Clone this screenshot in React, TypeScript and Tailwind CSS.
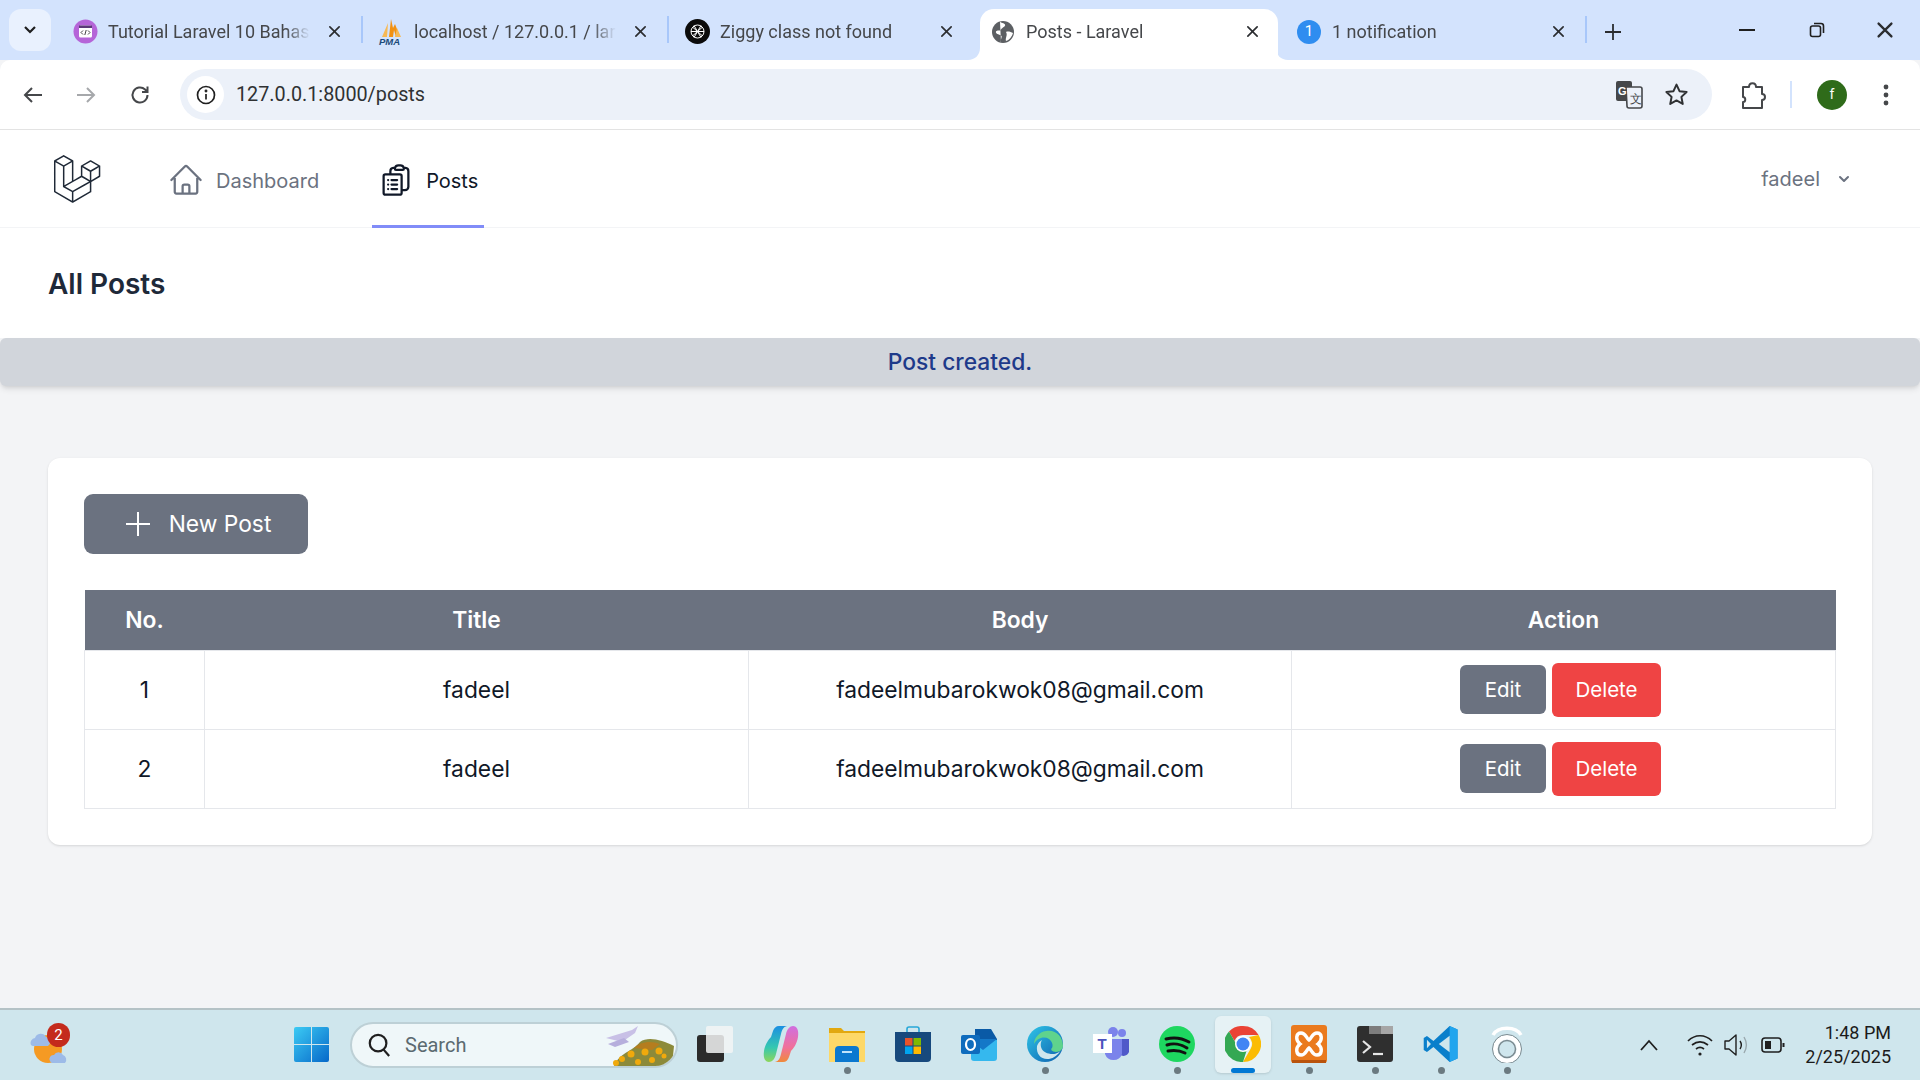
import type { ReactNode } from "react";

const logoPath =
  "M305.8 81.125C305.77 80.995 305.69 80.885 305.65 80.755C305.56 80.525 305.49 80.285 305.37 80.075C305.29 79.935 305.17 79.815 305.07 79.685C304.94 79.515 304.83 79.325 304.68 79.175C304.55 79.045 304.39 78.955 304.25 78.845C304.09 78.715 303.95 78.575 303.77 78.475L251.32 48.275C249.97 47.495 248.31 47.495 246.96 48.275L194.51 78.475C194.33 78.575 194.19 78.725 194.03 78.845C193.89 78.955 193.73 79.045 193.6 79.175C193.45 79.325 193.34 79.515 193.21 79.685C193.11 79.815 192.99 79.935 192.91 80.075C192.79 80.285 192.71 80.525 192.63 80.755C192.58 80.875 192.51 80.995 192.48 81.125C192.38 81.495 192.33 81.875 192.33 82.265V139.625L148.62 164.795V52.575C148.62 52.185 148.57 51.805 148.47 51.435C148.44 51.305 148.36 51.195 148.32 51.065C148.23 50.835 148.16 50.595 148.04 50.385C147.96 50.245 147.84 50.125 147.74 49.995C147.61 49.825 147.5 49.635 147.35 49.485C147.22 49.355 147.06 49.265 146.92 49.155C146.76 49.025 146.62 48.885 146.44 48.785L93.99 18.585C92.64 17.805 90.98 17.805 89.63 18.585L37.18 48.785C37 48.885 36.86 49.035 36.7 49.155C36.56 49.265 36.4 49.355 36.27 49.485C36.12 49.635 36.01 49.825 35.88 49.995C35.78 50.125 35.66 50.245 35.58 50.385C35.46 50.595 35.38 50.835 35.3 51.065C35.25 51.185 35.18 51.305 35.15 51.435C35.05 51.805 35 52.185 35 52.575V232.235C35 233.795 35.84 235.245 37.19 236.025L142.1 296.425C142.33 296.555 142.58 296.635 142.83 296.725C142.95 296.765 143.06 296.835 143.18 296.865C143.55 296.965 143.93 297.015 144.31 297.015C144.69 297.015 145.07 296.965 145.44 296.865C145.56 296.835 145.67 296.765 145.79 296.725C146.04 296.635 146.29 296.555 146.52 296.425L251.43 236.025C252.78 235.245 253.62 233.805 253.62 232.235V174.875L303.83 145.965C305.19 145.185 306.03 143.745 306.03 142.175V82.265C305.95 81.875 305.9 81.495 305.8 81.125ZM144.2 227.205L100.57 202.515L146.39 176.135L196.66 147.195L240.33 172.335L208.29 190.625L144.2 227.205ZM244.75 114.995V164.795L226.39 154.225L201.03 139.625V89.825L219.39 100.395L244.75 114.995ZM249.12 57.105L292.81 82.265L249.12 107.425L205.43 82.265L249.12 57.105ZM114.49 184.425L96.13 194.995V85.305L121.49 70.705L139.85 60.135V169.815L114.49 184.425ZM91.76 27.425L135.45 52.585L91.76 77.745L48.07 52.585L91.76 27.425ZM43.67 60.135L62.03 70.705L87.39 85.305V202.545V202.555V202.565C87.39 202.735 87.44 202.895 87.46 203.055C87.49 203.265 87.49 203.485 87.55 203.695V203.705C87.6 203.875 87.69 204.035 87.76 204.195C87.84 204.375 87.89 204.575 87.99 204.745C87.99 204.745 87.99 204.755 88 204.755C88.09 204.905 88.22 205.035 88.33 205.175C88.45 205.335 88.55 205.495 88.69 205.635L88.7 205.645C88.82 205.765 88.98 205.855 89.12 205.965C89.28 206.085 89.42 206.225 89.59 206.325C89.6 206.325 89.6 206.325 89.61 206.335C89.62 206.335 89.62 206.345 89.63 206.345L139.87 234.775V285.065L43.67 229.705V60.135ZM244.75 229.705L148.58 285.075V234.775L219.8 194.115L244.75 179.875V229.705ZM297.2 139.625L253.49 164.795V114.995L278.85 100.395L297.21 89.825V139.625H297.2Z";

function CloseX({ size = 13 }: { size?: number }) {
  return (
    <svg width={size} height={size} viewBox="0 0 14 14" stroke="#2b2d30" strokeWidth="1.8" strokeLinecap="round">
      <path d="M2 2l10 10M12 2L2 12" />
    </svg>
  );
}

function Tab({
  title,
  icon,
  active,
  sep,
}: {
  title: string;
  icon: ReactNode;
  active?: boolean;
  sep?: boolean;
}) {
  return (
    <div className="relative flex h-[51px] w-[306px] shrink-0 items-center pb-[6px]">
      {active && (
        <>
          <div className="absolute inset-y-0 left-[2px] right-[6px] rounded-t-[14px] bg-white" />
          <svg className="absolute bottom-0 -left-[10px]" width="12" height="12" viewBox="0 0 12 12" fill="#fff">
            <path d="M12 0v12H0c7 0 12-5 12-12z" />
          </svg>
          <svg className="absolute bottom-0 right-[-4px]" width="12" height="12" viewBox="0 0 12 12" fill="#fff">
            <path d="M0 0v12h12C5 12 0 7 0 0z" />
          </svg>
        </>
      )}
      <div className="relative ml-[12px] flex h-[26px] w-[26px] shrink-0 items-center justify-center">{icon}</div>
      <div className="relative ml-[10px] w-[202px] overflow-hidden whitespace-nowrap text-[18px] text-[#45474a] [mask-image:linear-gradient(to_right,black_88%,transparent)]">
        {title}
      </div>
      <div className="relative ml-[18px]">
        <CloseX />
      </div>
      {sep && <div className="absolute right-[3px] top-[7px] h-[27px] w-[2px] bg-[#a8c7fa]" />}
    </div>
  );
}

function ChromeBar() {
  return (
    <div className="shrink-0 font-['Roboto',sans-serif]">
      <div className="flex h-[60px] items-end bg-[#d3e3fd]">
        <div className="mb-[9px] ml-[9px] mr-[9px] flex h-[42px] w-[42px] items-center justify-center rounded-[12px] bg-[#e9f1fe]">
          <svg width="14" height="10" viewBox="0 0 14 10" fill="none" stroke="#1f1f1f" strokeWidth="2.2">
            <path d="M2 2l5 5 5-5" />
          </svg>
        </div>
        <Tab
          title="Tutorial Laravel 10 Bahasa"
          sep
          icon={
            <svg width="25" height="25" viewBox="0 0 25 25">
              <circle cx="12.5" cy="12.5" r="12" fill="#b565d8" />
              <rect x="6" y="6.5" width="13" height="12" rx="1.5" fill="#fff" />
              <rect x="6" y="6.5" width="13" height="2.5" fill="#5b3a78" />
              <path d="M10 11.5l-2 2 2 2M15 11.5l2 2-2 2M13.2 11l-1.4 5" fill="none" stroke="#444" strokeWidth="1" />
            </svg>
          }
        />
        <Tab
          title="localhost / 127.0.0.1 / laravel"
          sep
          icon={
            <svg width="26" height="26" viewBox="0 0 26 26">
              <path d="M11 18L13 0l2 9 2-4 5 13h-4l-2-7-1 7z" fill="#f29111" />
              <path d="M4 18L10 4l-1 14zM17 18l2-9 4 9z" fill="#f7b955" />
              <text x="1" y="26" fontSize="9.5" fontWeight="700" fontStyle="italic" fill="#1b4a7a" fontFamily="'Liberation Sans',sans-serif">
                PMA
              </text>
            </svg>
          }
        />
        <Tab
          title="Ziggy class not found"
          icon={
            <svg width="25" height="25" viewBox="0 0 25 25" fill="none">
              <circle cx="12.5" cy="12.5" r="12.5" fill="#0b0b0b" />
              <g stroke="#fff" strokeWidth="1">
                <circle cx="12.5" cy="12.5" r="6.5" />
                <path d="M9 6.5l7 12M16 6.5l-7 12M6 12.5h13M8 8.5l9 8M17 8.5l-9 8" />
              </g>
            </svg>
          }
        />
        <Tab
          title="Posts - Laravel"
          active
          icon={
            <svg width="24" height="24" viewBox="0 0 24 24">
              <circle cx="12" cy="12" r="11" fill="#5c5f63" />
              <path d="M9 1.5c1 2 4 1 5 3s-3 3-4 5-4 0-5 2 3 3 5 4-1 4 0 7M15 12c2-1 5 0 7 1-1 3-3 7-7 8-1-3 2-6 0-9z" fill="#fff" />
            </svg>
          }
        />
        <Tab
          title="1 notification"
          sep
          icon={
            <div className="flex h-[24px] w-[24px] items-center justify-center rounded-full bg-[#2f8df0] text-[15px] text-white">1</div>
          }
        />
        <div className="mb-[14px] ml-[14px] flex h-[28px] w-[18px] items-center justify-center">
          <svg width="16" height="16" viewBox="0 0 16 16" stroke="#2b2d30" strokeWidth="1.8">
            <path d="M8 0v16M0 8h16" />
          </svg>
        </div>
        <div className="mb-[12px] ml-auto flex h-[36px] items-center">
          <div className="flex w-[70px] justify-center">
            <svg width="16" height="2" viewBox="0 0 16 2" fill="#1f1f1f">
              <rect width="16" height="2" />
            </svg>
          </div>
          <div className="flex w-[70px] justify-center">
            <svg width="16" height="16" viewBox="0 0 16 16" fill="none" stroke="#1f1f1f" strokeWidth="1.6">
              <rect x="1.5" y="4" width="10" height="10.5" rx="2" />
              <path d="M5 1.5h7a2.5 2.5 0 012.5 2.5v7" />
            </svg>
          </div>
          <div className="flex w-[68px] justify-center pr-[2px]">
            <CloseX size={18} />
          </div>
        </div>
      </div>
      <div className="relative flex h-[70px] items-center rounded-t-[10px] border-b border-[#e3e3e3] bg-white">
        <div className="ml-[22px] flex items-center">
          <svg width="22" height="22" viewBox="0 0 22 22" fill="none" stroke="#45474a" strokeWidth="2">
            <path d="M20 11H3M10 4l-7 7 7 7" />
          </svg>
          <svg className="ml-[31px]" width="22" height="22" viewBox="0 0 22 22" fill="none" stroke="#a6a8ab" strokeWidth="2">
            <path d="M2 11h17M12 4l7 7-7 7" />
          </svg>
          <svg className="ml-[32px]" width="22" height="22" viewBox="0 0 22 22" fill="none" stroke="#45474a" strokeWidth="2">
            <path d="M18.5 11a7.5 7.5 0 11-2.4-5.5L18.500 8M18.500 2.5V8H13" />
          </svg>
        </div>
        <div className="ml-[29px] flex h-[51px] w-[1532px] items-center rounded-full bg-[#ecf1f9]">
          <div className="ml-[7px] flex h-[37px] w-[37px] items-center justify-center rounded-full bg-white">
            <svg width="20" height="20" viewBox="0 0 20 20" fill="none" stroke="#1f1f1f" strokeWidth="1.7">
              <circle cx="10" cy="10" r="8.5" />
              <path d="M10 9v5.5" />
              <circle cx="10" cy="6" r="0.6" fill="#1f1f1f" />
            </svg>
          </div>
          <span className="ml-[12px] text-[19.8px] text-[#2f3133]">127.0.0.1:8000/posts</span>
          <svg className="ml-auto" width="28" height="30" viewBox="0 0 28 30">
            <rect x="1" y="1" width="16" height="20" rx="2" fill="#45474a" />
            <path d="M11 7h14a2 2 0 012 2v17a2 2 0 01-2 2H14a2 2 0 01-2-2z" fill="#ecf1f9" stroke="#45474a" strokeWidth="1.6" />
            <text x="3" y="15" fontSize="11" fontWeight="700" fill="#fff" fontFamily="'Liberation Sans',sans-serif">G</text>
            <text x="15" y="23" fontSize="12" fill="#45474a" fontFamily="'Liberation Sans',sans-serif">文</text>
          </svg>
          <svg className="ml-[21px] mr-[23px]" width="25" height="25" viewBox="0 0 24 24" fill="none" stroke="#2f3133" strokeWidth="1.9" strokeLinejoin="round">
            <path d="M12 2.5l2.9 6.3 6.8.8-5 4.7 1.3 6.8-6-3.4-6 3.4 1.3-6.8-5-4.7 6.8-.8z" />
          </svg>
        </div>
        <svg className="ml-[27px]" width="28" height="30" viewBox="0 0 28 30" fill="none" stroke="#45474a" strokeWidth="2">
          <path d="M4 7h6c0-5 7-5 7 0h6v7c4 0 4 6 0 6v8H4v-6c3 0 3-5 0-5z" strokeLinejoin="round" />
        </svg>
        <div className="ml-[23px] h-[27px] w-[2px] bg-[#d3e3fd]" />
        <div className="ml-[25px] flex h-[30px] w-[30px] items-center justify-center rounded-full bg-[#2f6b1a] text-[14px] text-white">f</div>
        <svg className="ml-[36px]" width="6" height="24" viewBox="0 0 6 24" fill="#45474a">
          <circle cx="3" cy="4" r="2.4" />
          <circle cx="3" cy="12" r="2.4" />
          <circle cx="3" cy="20" r="2.4" />
        </svg>
      </div>
    </div>
  );
}

function NavBar() {
  return (
    <nav className="flex h-[98px] shrink-0 items-stretch border-b border-gray-100 bg-white pl-[48px] pr-[66px]">
      <div className="flex items-center">
        <svg width="54" height="54" viewBox="0 0 316 316" fill="#1f2937">
          <path d={logoPath} />
        </svg>
      </div>
      <a className="ml-[60px] flex items-center gap-[12px] px-[6px] pt-[2px] text-[20px] text-[#6b7280]">
        <svg width="36" height="36" viewBox="0 0 24 24" fill="none" stroke="currentColor" strokeWidth="1.5" strokeLinecap="round" strokeLinejoin="round">
          <path d="M2.25 12l8.954-8.955c.44-.439 1.152-.439 1.591 0L21.75 12M4.5 9.75v10.125c0 .621.504 1.125 1.125 1.125H9.75v-4.875c0-.621.504-1.125 1.125-1.125h2.25c.621 0 1.125.504 1.125 1.125V21h4.125c.621 0 1.125-.504 1.125-1.125V9.75M8.25 21h8.25" />
        </svg>
        <span className="mt-[2px]">Dashboard</span>
      </a>
      <a className="mb-[-1px] ml-[47px] flex items-center gap-[12px] border-b-[3px] border-[#818cf8] px-[6px] pt-[5px] text-[20px] text-gray-900">
        <svg width="36" height="36" viewBox="0 0 24 24" fill="none" stroke="currentColor" strokeWidth="1.5" strokeLinecap="round" strokeLinejoin="round">
          <path d="M9 12h3.75M9 15h3.75M9 18h3.75m3 .75H18a2.25 2.25 0 002.25-2.25V6.108c0-1.135-.845-2.098-1.976-2.192a48.424 48.424 0 00-1.123-.08m-5.801 0c-.065.21-.1.433-.1.664 0 .414.336.75.75.75h4.5a.75.75 0 00.75-.75 2.25 2.25 0 00-.1-.664m-5.8 0A2.251 2.251 0 0113.5 2.25H15c1.012 0 1.867.668 2.15 1.586m-5.8 0c-.376.023-.75.05-1.124.08C9.095 4.01 8.25 4.973 8.25 6.108V8.25m0 0H4.875c-.621 0-1.125.504-1.125 1.125v11.25c0 .621.504 1.125 1.125 1.125h9.75c.621 0 1.125-.504 1.125-1.125V9.375c0-.621-.504-1.125-1.125-1.125H8.25zM6.75 12h.008v.008H6.75V12zm0 3h.008v.008H6.75V15zm0 3h.008v.008H6.75V18z" />
        </svg>
        <span className="mt-[2px]">Posts</span>
      </a>
      <div className="ml-auto flex items-center gap-[14px] text-[20px] text-[#6b7280]">
        <span>fadeel</span>
        <svg width="20" height="20" viewBox="0 0 20 20" fill="currentColor">
          <path fillRule="evenodd" clipRule="evenodd" d="M5.293 7.293a1 1 0 011.414 0L10 10.586l3.293-3.293a1 1 0 111.414 1.414l-4 4a1 1 0 01-1.414 0l-4-4a1 1 0 010-1.414z" />
        </svg>
      </div>
    </nav>
  );
}

const posts = [
  { no: 1, title: "fadeel", body: "fadeelmubarokwok08@gmail.com" },
  { no: 2, title: "fadeel", body: "fadeelmubarokwok08@gmail.com" },
];

function PostsTable() {
  return (
    <table className="w-[1752px] table-fixed border-collapse text-center text-[22.8px] text-gray-900">
      <thead className="bg-[#6b7280] text-white">
        <tr className="h-[60px]">
          <th className="w-[120px] font-semibold">No.</th>
          <th className="w-[544px] font-semibold">Title</th>
          <th className="w-[543px] font-semibold">Body</th>
          <th className="font-semibold">Action</th>
        </tr>
      </thead>
      <tbody>
        {posts.map((p) => (
          <tr key={p.no} className="h-[79px]">
            <td className="border border-gray-200 pt-[2px]">{p.no}</td>
            <td className="border border-gray-200 pt-[2px]">{p.title}</td>
            <td className="border border-gray-200 pt-[2px]">{p.body}</td>
            <td className="border border-gray-200">
              <div className="flex items-center justify-center gap-[6px] pr-[6px] text-[20.5px] text-white">
                <button className="h-[49px] w-[86px] rounded-[6px] bg-[#6b7280] pt-[2px]">Edit</button>
                <button className="h-[54px] w-[109px] rounded-[6px] bg-[#ef4444] pt-[2px]">Delete</button>
              </div>
            </td>
          </tr>
        ))}
      </tbody>
    </table>
  );
}

function Slot({ children, dot, active }: { children: ReactNode; dot?: boolean; active?: boolean }) {
  return (
    <div className="relative flex h-[70px] w-[66px] shrink-0 items-center justify-center">
      {active && <div className="absolute left-[5px] top-[6px] h-[57px] w-[56px] rounded-[6px] bg-[#e6f2f5] shadow-sm" />}
      <div className="relative -mt-[2px] flex h-[38px] w-[38px] items-center justify-center">{children}</div>
      {dot && <div className="absolute bottom-[6px] left-[30px] h-[7px] w-[7px] rounded-full bg-[#6b7a80]" />}
      {active && <div className="absolute bottom-[7px] left-[21px] h-[5px] w-[24px] rounded-full bg-[#0078d4]" />}
    </div>
  );
}

function Taskbar() {
  return (
    <div className="flex h-[72px] shrink-0 items-center border-t-2 border-[#b4c2c6] bg-[#cfe6ed] font-['Roboto',sans-serif]">
      <div className="relative ml-[30px] h-[44px] w-[40px] shrink-0">
        <svg width="40" height="44" viewBox="0 0 40 44">
          <circle cx="18" cy="26" r="14" fill="#f59a23" />
          <path d="M1 22a5 5 0 014-7 6 6 0 0111-1 5 5 0 012 9H4a3 3 0 01-3-1z" fill="#9dbbe8" />
          <path d="M20 38a4 4 0 014-6 5 5 0 019 0 5 5 0 012 8H22a3 3 0 01-2-2z" fill="#9dbbe8" />
        </svg>
        <div className="absolute right-0 top-0 flex h-[24px] w-[23px] items-center justify-center rounded-full bg-[#c42b1c] text-[15px] text-white">2</div>
      </div>
      <div className="ml-[208px]">
        <Slot>
          <svg width="35" height="35" viewBox="0 0 35 35">
            <defs>
              <linearGradient id="win" x1="0" y1="0" x2="1" y2="1">
                <stop offset="0" stopColor="#3ccbf4" />
                <stop offset="1" stopColor="#0668c9" />
              </linearGradient>
            </defs>
            <path d="M0 2a2 2 0 012-2h15v17H0zM18 0h15a2 2 0 012 2v15H18zM0 18h17v17H2a2 2 0 01-2-2zM18 18h17v15a2 2 0 01-2 2H18z" fill="url(#win)" />
          </svg>
        </Slot>
      </div>
      <div className="ml-[6px] flex h-[46px] w-[328px] shrink-0 items-center overflow-hidden rounded-full border-2 border-[#bdd0d6] bg-[#eff7f9] pl-[15px]">
        <svg width="24" height="26" viewBox="0 0 26 28" fill="none" stroke="#1f1f1f" strokeWidth="2.4">
          <circle cx="12" cy="12" r="9" />
          <path d="M18 19l6 7" />
        </svg>
        <span className="ml-[14px] text-[20px] text-[#5b6a70]">Search</span>
        <svg className="ml-auto" width="72" height="42" viewBox="0 0 72 42">
          <path d="M2 14l26-8 6-4-3 7-13 9-4-1z" fill="#c8c0e6" />
          <path d="M4 20l16-6 5 4-14 5z" fill="#b6aedc" />
          <path d="M10 42c6-14 18-14 26-24 8-6 22-2 34 4l-2 20z" fill="#8c8a3a" />
          <path d="M30 24c6-6 16-8 26-4l-8 6z" fill="#b57d1e" />
          <g fill="#f0a90c">
            <circle cx="12" cy="39" r="3" />
            <circle cx="18" cy="35" r="3" />
            <circle cx="27" cy="30" r="3.5" />
            <circle cx="34" cy="38" r="3" />
            <circle cx="41" cy="28" r="3.5" />
            <circle cx="48" cy="36" r="3" />
            <circle cx="55" cy="27" r="3.5" />
            <circle cx="60" cy="32" r="2.5" />
          </g>
        </svg>
      </div>
      <div className="ml-[4px] flex">
        <Slot>
          <svg width="36" height="36" viewBox="0 0 36 36">
            <rect x="0" y="9" width="27" height="27" rx="3" fill="#2b2b2b" />
            <rect x="9" y="0" width="27" height="27" rx="2" fill="#f3f5f5" fillOpacity="0.85" />
          </svg>
        </Slot>
        <Slot>
          <svg width="36" height="36" viewBox="0 0 36 36">
            <defs>
              <linearGradient id="cop1" x1="0" y1="0" x2="0" y2="1">
                <stop offset="0" stopColor="#1b8fe2" />
                <stop offset="0.6" stopColor="#35c8b0" />
                <stop offset="1" stopColor="#8fd65a" />
              </linearGradient>
              <linearGradient id="cop2" x1="0" y1="0" x2="0" y2="1">
                <stop offset="0" stopColor="#d06fe0" />
                <stop offset="0.6" stopColor="#f0709a" />
                <stop offset="1" stopColor="#f08a3a" />
              </linearGradient>
            </defs>
            <path d="M10 5C11 2 13 0 16 0H24C20 1 19 4 18 8L13 28C12 33 9 36 6 36 2 36 0 32 1 25 2 18 6 13 8 11Z" fill="url(#cop1)" />
            <path d="M26 31C25 34 23 36 20 36H12C16 35 17 32 18 28L23 8C24 3 27 0 30 0 34 0 36 4 35 11 34 18 30 23 28 25Z" fill="url(#cop2)" />
          </svg>
        </Slot>
        <Slot dot>
          <svg width="36" height="36" viewBox="0 0 36 36">
            <path d="M0 2h12l3 3h21v31H0z" fill="#e2a80f" />
            <rect x="0" y="7" width="36" height="29" fill="#fdd868" />
            <path d="M6 36V24a4 4 0 014-4h16a4 4 0 014 4v12z" fill="#0b78cf" />
            <rect x="13" y="25" width="10" height="2" fill="#bfe3fb" />
          </svg>
        </Slot>
        <Slot>
          <svg width="36" height="36" viewBox="0 0 36 36">
            <path d="M12 6V3a2 2 0 012-2h8a2 2 0 012 2v3" fill="none" stroke="#28a8d8" strokeWidth="1.6" />
            <path d="M0 6h36v26a4 4 0 01-4 4H4a4 4 0 01-4-4z" fill="#17497d" />
            <rect x="10" y="12" width="7.5" height="7.5" fill="#e8532a" />
            <rect x="18.5" y="12" width="7.5" height="7.5" fill="#7fba00" />
            <rect x="10" y="20.5" width="7.5" height="7.5" fill="#00a4ef" />
            <rect x="18.5" y="20.5" width="7.5" height="7.5" fill="#ffb900" />
          </svg>
        </Slot>
        <Slot>
          <svg width="36" height="36" viewBox="0 0 36 36">
            <path d="M14 3h16l6 10v8L14 30z" fill="#0a5aa6" />
            <path d="M10 14h26v18a3 3 0 01-3 3H13a3 3 0 01-3-3z" fill="#35b8ee" />
            <path d="M36 13L22 24 10 15l2-2z" fill="#1478c8" />
            <rect x="0" y="9" width="19" height="19" rx="2" fill="#0f6cbd" />
            <ellipse cx="9.5" cy="18.5" rx="4.5" ry="5.5" fill="none" stroke="#fff" strokeWidth="2.2" />
          </svg>
        </Slot>
        <Slot dot>
          <svg width="36" height="36" viewBox="0 0 36 36">
            <defs>
              <linearGradient id="edge" x1="0" y1="0" x2="1" y2="1">
                <stop offset="0" stopColor="#2fc6e8" />
                <stop offset="1" stopColor="#0e5fae" />
              </linearGradient>
            </defs>
            <circle cx="18" cy="18" r="18" fill="url(#edge)" />
            <path d="M36 20c0-10-8-17-17-15-7 1-12 7-12 13 3-6 10-8 15-5 4 3 4 7 3 9-2 1 0 4 4 4 4 0 7-3 7-6z" fill="#5fd38d" />
            <path d="M22 33c-8 1-13-5-12-13 1-3 3-5 5-6-3 5-1 14 11 14 3 0 7-2 8-4-3 5-7 8-12 9z" fill="#cfe6ed" />
          </svg>
        </Slot>
        <Slot>
          <svg width="36" height="36" viewBox="0 0 36 36">
            <circle cx="29" cy="7" r="4" fill="#7b83eb" />
            <circle cx="20" cy="6" r="5" fill="#7b83eb" />
            <path d="M26 13h10v13a6 6 0 01-10 2z" fill="#5059c9" />
            <path d="M12 13h17v15a9 9 0 01-17 0z" fill="#7b83eb" />
            <rect x="0" y="8" width="19" height="19" fill="#fff" />
            <text x="4.5" y="23" fontSize="15" fontWeight="700" fill="#4b53bc" fontFamily="'Liberation Sans',sans-serif">T</text>
          </svg>
        </Slot>
        <Slot dot>
          <svg width="36" height="36" viewBox="0 0 36 36" fill="none">
            <circle cx="18" cy="18" r="18" fill="#1ed760" />
            <path d="M7 13c8-2 16-1 23 3M8 19c6-2 14-1 20 3M9 25c6-1 11-1 17 2" stroke="#111" strokeWidth="3" strokeLinecap="round" />
          </svg>
        </Slot>
        <Slot active>
          <svg width="36" height="36" viewBox="0 0 36 36">
            <path d="M18 0a18 18 0 0115.6 9H18a9 9 0 00-8.5 6L4 5.5A18 18 0 0118 0z" fill="#ea4335" />
            <path d="M33.6 9A18 18 0 0118 36l7.8-13.5A9 9 0 0024 11z" fill="#fbbc04" />
            <path d="M18 36A18 18 0 014 5.5l7.8 13.5a8 8 0 0010 5z" fill="#34a853" />
            <circle cx="18" cy="18" r="8" fill="#fff" />
            <circle cx="18" cy="18" r="6.5" fill="#4285f4" />
          </svg>
        </Slot>
        <Slot dot>
          <svg width="36" height="38" viewBox="0 0 36 38" fill="none">
            <rect x="0" y="0" width="36" height="38" rx="3" fill="#ea7a1e" />
            <rect x="1" y="35" width="34" height="3" fill="#b9530c" />
            <path d="M10 8c5 0 5 5 8 7 3-2 3-7 8-7 5 0 6 7 1 11 5 4 4 11-1 11-5 0-5-5-8-7-3 2-3 7-8 7-5 0-6-7-1-11-5-4-4-11 1-11z" stroke="#fff" strokeWidth="3.4" />
          </svg>
        </Slot>
        <Slot dot>
          <svg width="36" height="36" viewBox="0 0 36 36" fill="none">
            <rect width="36" height="36" rx="3" fill="#2f2f2f" />
            <rect width="12" height="8" y="0" x="12" fill="#7d7d7d" />
            <rect width="12" height="8" y="0" x="24" fill="#a6a6a6" />
            <path d="M6 15l7 6-7 6" stroke="#e6e6e6" strokeWidth="2.2" />
            <path d="M16 28h10" stroke="#e6e6e6" strokeWidth="2.2" />
          </svg>
        </Slot>
        <Slot dot>
          <svg width="36" height="38" viewBox="0 0 100 100">
            <path d="M96 10L74 0 29 42 11 28l-9 5v34l9 5 18-14 45 42 22-10z" fill="#0a7fcb" />
            <path d="M74 0l22 10v80l-22 10z" fill="#22a5ee" />
            <path d="M74 27L44 50l30 23z" fill="#cfe6ed" />
            <path d="M11 38l11 12-11 12z" fill="#cfe6ed" />
          </svg>
        </Slot>
        <Slot dot>
          <svg width="34" height="38" viewBox="0 0 34 38" fill="none" stroke="#fff">
            <path d="M3 10C8 1 26 1 31 10" strokeWidth="3.5" />
            <circle cx="17" cy="24" r="12" strokeWidth="4.5" fill="#e8f2f5" />
            <circle cx="17" cy="24" r="14.5" stroke="#7a8a90" strokeWidth="1" />
            <circle cx="17" cy="24" r="8.5" stroke="#7a8a90" strokeWidth="1.5" fill="#cfe6ed" />
          </svg>
        </Slot>
      </div>
      <div className="ml-auto flex items-center pr-[29px]">
        <svg width="18" height="12" viewBox="0 0 18 12" fill="none" stroke="#1f1f1f" strokeWidth="1.8">
          <path d="M1 11l8-9 8 9" />
        </svg>
        <svg className="ml-[29px]" width="26" height="26" viewBox="0 0 26 26" fill="none" stroke="#1f1f1f" strokeWidth="1.7">
          <path d="M1 9c7-7 17-7 24 0M5 13c5-4 11-4 16 0M9 17c2.5-2 5.5-2 8 0" />
          <circle cx="13" cy="22" r="1.6" fill="#1f1f1f" stroke="none" />
        </svg>
        <svg className="ml-[10px]" width="26" height="26" viewBox="0 0 26 26" fill="none" stroke="#1f1f1f" strokeWidth="1.4">
          <path d="M2 9h4l7-6v20l-7-6H2z" strokeLinejoin="round" />
          <path d="M17 9c2 3 2 5 0 8" />
          <path d="M21 5c3 5 3 11 0 16" stroke="#9aa8ad" />
        </svg>
        <svg className="ml-[12px]" width="24" height="16" viewBox="0 0 24 16" fill="none" stroke="#1f1f1f" strokeWidth="1.6">
          <rect x="1" y="1" width="19" height="14" rx="3" />
          <rect x="4" y="4" width="6" height="8" fill="#1f1f1f" stroke="none" />
          <path d="M22.5 6v4" strokeWidth="2" />
        </svg>
        <div className="ml-[22px] flex w-[84px] flex-col items-end text-[18px] leading-[24px] text-[#1b1b1b]">
          <span className="whitespace-nowrap">1:48 PM</span>
          <span className="whitespace-nowrap">2/25/2025</span>
        </div>
      </div>
    </div>
  );
}

export default function App() {
  return (
    <div className="flex h-screen flex-col overflow-hidden bg-[#f3f4f6]">
      <ChromeBar />
      <div className="flex min-h-0 flex-1 flex-col font-['Inter',sans-serif]">
        <NavBar />
        <header className="flex h-[110px] shrink-0 items-center bg-white px-[48px] pt-[2px] text-[28px] font-semibold text-gray-800">
          All Posts
        </header>
        <div className="flex h-[48px] shrink-0 items-center justify-center rounded-[6px] bg-[#d1d5db] text-[22.8px] font-medium text-[#1e3a8a] shadow-md">
          Post created.
        </div>
        <main className="px-[48px] pt-[72px]">
          <div className="rounded-[12px] bg-white p-[36px] shadow-sm">
            <button className="mb-[36px] flex h-[60px] w-[224px] items-center justify-center gap-[18px] rounded-[9px] bg-[#6b7280] pl-[4px] text-[22.8px] text-white">
              <svg width="26" height="26" viewBox="0 0 26 26" stroke="currentColor" strokeWidth="2">
                <path d="M13 1v24M1 13h24" />
              </svg>
              New Post
            </button>
            <PostsTable />
          </div>
        </main>
      </div>
      <Taskbar />
    </div>
  );
}
